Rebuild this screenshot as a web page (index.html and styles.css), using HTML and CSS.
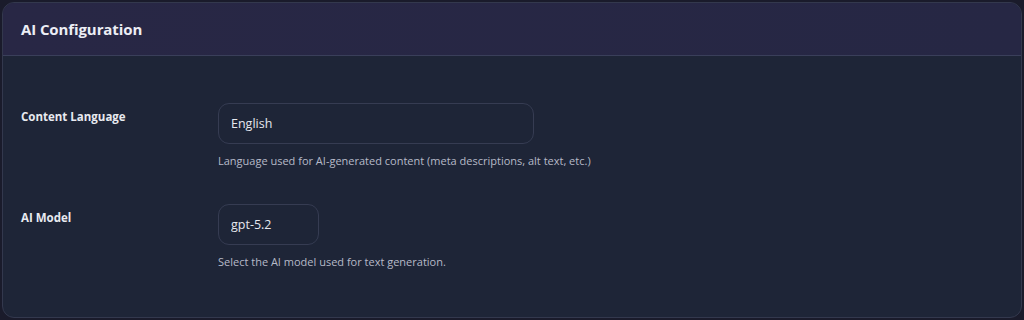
FILE: index.html
```html
<!DOCTYPE html>
<html lang="en">
  <head>
    <meta charset="UTF-8" />
    <meta name="viewport" content="width=device-width, initial-scale=1.0" />
    <title>AI Configuration</title>
    <link rel="stylesheet" href="styles.css">
  </head>
  <body>
    <div class="card">
      <div class="card-header">
        <h2>AI Configuration</h2>
      </div>

      <div class="card-body">
        <div class="form-row">
          <label class="form-label" for="language">Content Language</label>
          <div class="form-field">
            <input type="text" id="language" class="input input-wide" value="English" />
            <p class="help">Language used for AI-generated content (meta descriptions, alt text, etc.)</p>
          </div>
        </div>

        <div class="form-row">
          <label class="form-label" for="model">AI Model</label>
          <div class="form-field">
            <input type="text" id="model" class="input input-small" value="gpt-5.2" />
            <p class="help">Select the AI model used for text generation.</p>
          </div>
        </div>
      </div>
    </div>
  </body>
</html>
```

FILE: styles.css
```css
* {
  margin: 0;
  padding: 0;
  box-sizing: border-box;
}

body {
  font-family: "Open Sans", "Noto Sans", sans-serif;
  background: #1a1b2b;
  color: #e6e8ef;
  padding: 2px;
  height: 320px;
  overflow: hidden;
}

.card {
  background: #1e2537;
  border: 1px solid #33384d;
  border-radius: 12px;
  height: 316px;
  overflow: hidden;
}

.card-header {
  background: linear-gradient(90deg, #282745 0%, #262744 100%);
  border-bottom: 1px solid #3a3f5a;
  height: 53px;
  display: flex;
  align-items: center;
  padding: 0 18px;
}

.card-header h2 {
  font-size: 15px;
  font-weight: 700;
  color: #eceef5;
  letter-spacing: -0.1px;
}

.card-body {
  padding: 47px 18px 0;
}

.form-row {
  display: flex;
  margin-bottom: 36px;
}

.form-label {
  width: 197px;
  flex-shrink: 0;
  font-size: 11.5px;
  font-weight: 700;
  color: #e8eaf0;
  padding-top: 6px;
}

.form-field {
  display: flex;
  flex-direction: column;
  align-items: flex-start;
}

.input {
  height: 41px;
  background: #1e2537;
  border: 1px solid #363c52;
  border-radius: 11px;
  color: #e6e8ef;
  font-family: inherit;
  font-size: 12.5px;
  padding: 0 12px;
}

.input:focus {
  outline: none;
  border-color: #667eea;
}

.input-wide {
  width: 316px;
}

.input-small {
  width: 101px;
}

.help {
  margin-top: 9px;
  font-size: 11px;
  color: #b6bac8;
}
```
